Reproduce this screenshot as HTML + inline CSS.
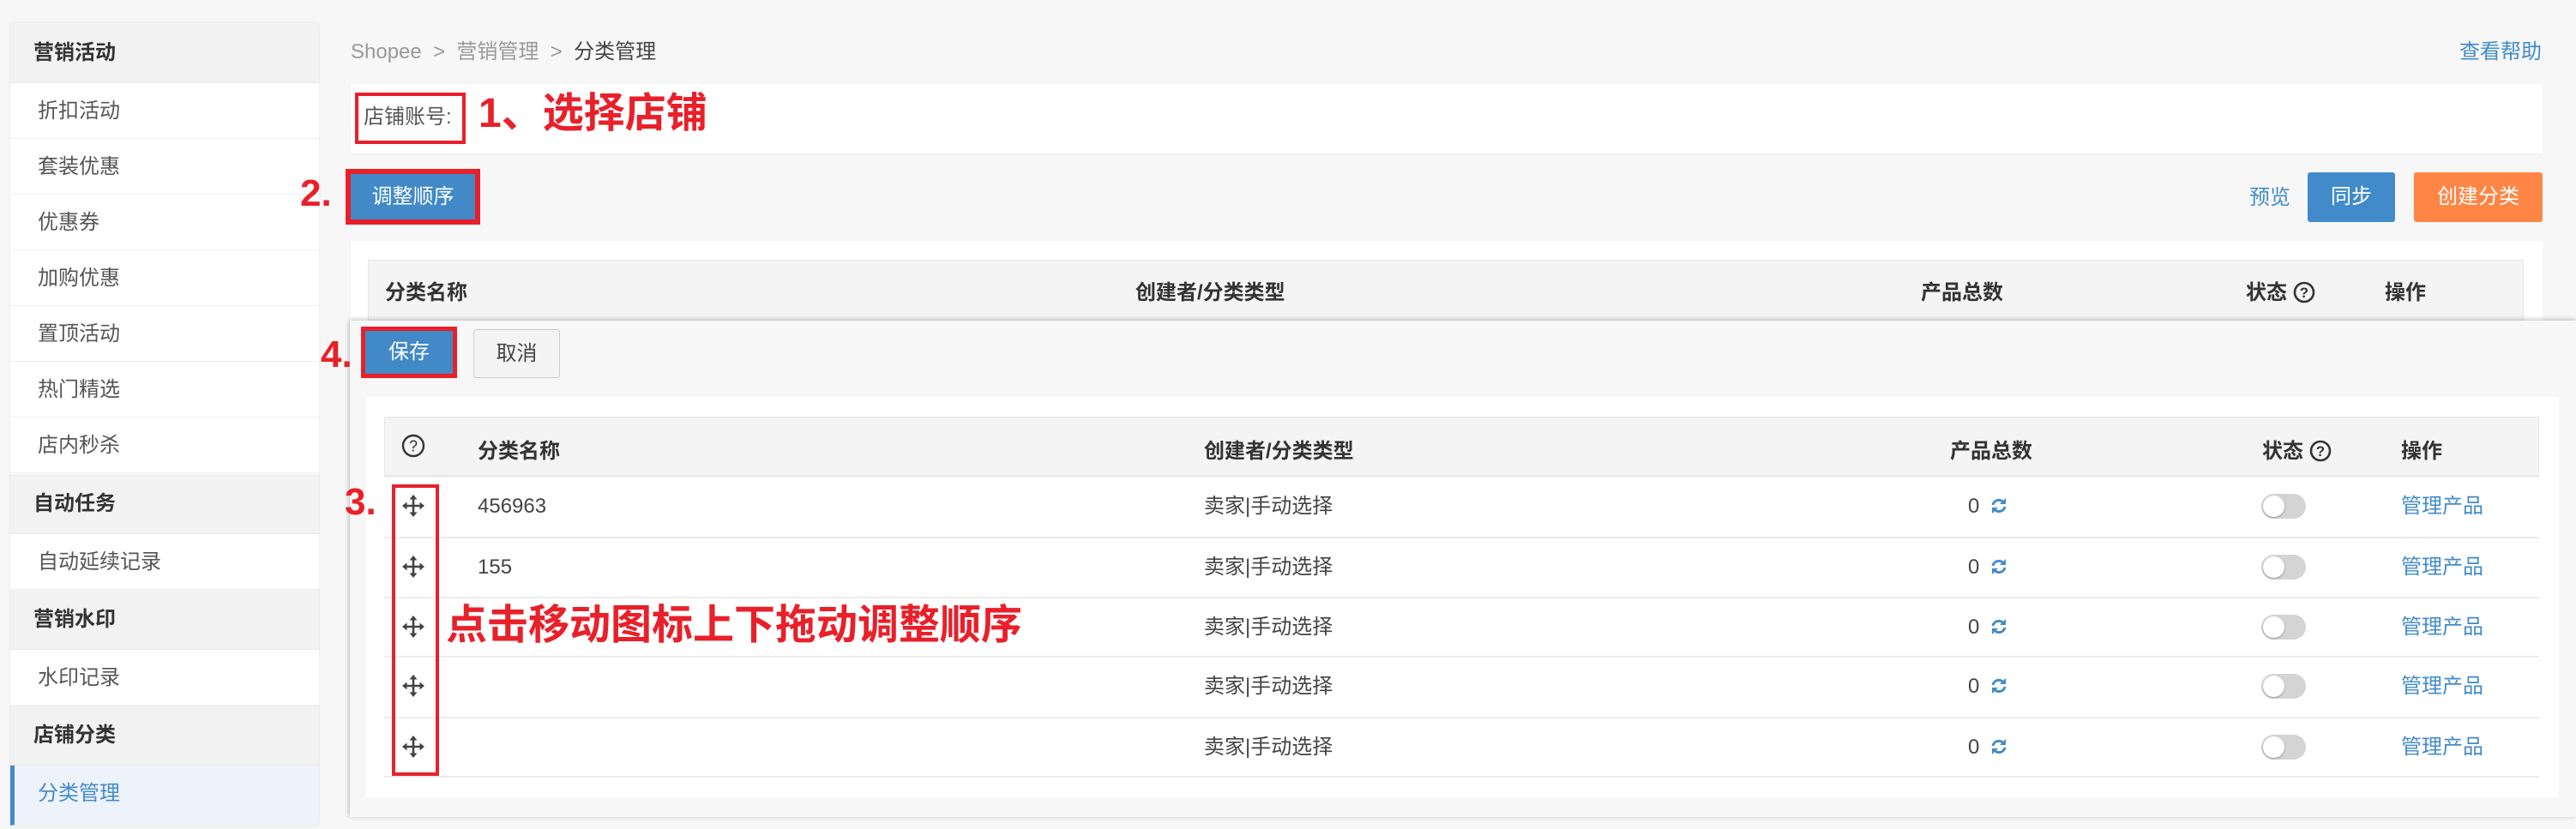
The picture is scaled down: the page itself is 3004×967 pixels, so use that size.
<!DOCTYPE html>
<html><head><meta charset="utf-8"><style>
*{margin:0;padding:0;box-sizing:border-box}
body{width:3004px;height:967px;background:#f7f7f7;font-family:"Liberation Sans","Noto Sans CJK SC",sans-serif;font-size:24px;color:#333;position:relative;overflow:hidden}
.a{position:absolute}
.side{left:12px;top:27px;width:360px;height:936px;background:#fff;box-shadow:0 0 4px rgba(0,0,0,.08)}
.sh{position:absolute;left:0;width:360px;height:70px;background:#f2f2f2;font-weight:bold;color:#333;line-height:70px;padding-left:27px;border-bottom:1px solid #e8e8e8}
.si{position:absolute;left:0;width:360px;height:65px;background:#fff;color:#555;line-height:65px;padding-left:32px;border-bottom:1px solid #eee}
.red{color:#e8202a;font-weight:bold}
.rbox{position:absolute;border:4px solid #e8202a}
.btn{position:absolute;color:#fff;text-align:center;border-radius:3px}
.th{position:absolute;font-weight:bold;color:#333}
.row{position:absolute;left:448px;width:2513px;height:70px;border-top:2px solid #ececec;background:#fff}
.row span{position:absolute;top:0;line-height:68px;color:#444}
.row span.link{color:#428bca}
.tog{position:absolute;width:52px;height:29px;border-radius:15px;background:#d4d4d4}
.tog:after{content:"";position:absolute;left:2px;top:2px;width:25px;height:25px;border-radius:50%;background:#fff;box-shadow:0 1px 2px rgba(0,0,0,.3)}
.link{color:#428bca}
</style></head><body>
<div class="a side">
<div class="sh" style="top:0">营销活动</div>
<div class="si" style="top:70px">折扣活动</div>
<div class="si" style="top:135px">套装优惠</div>
<div class="si" style="top:200px">优惠券</div>
<div class="si" style="top:265px">加购优惠</div>
<div class="si" style="top:330px">置顶活动</div>
<div class="si" style="top:395px">热门精选</div>
<div class="si" style="top:460px">店内秒杀</div>
<div class="sh" style="top:526px">自动任务</div>
<div class="si" style="top:596px">自动延续记录</div>
<div class="sh" style="top:661px">营销水印</div>
<div class="si" style="top:731px">水印记录</div>
<div class="sh" style="top:796px">店铺分类</div>
<div class="si" style="top:866px;background:#eef2fa;color:#428bca;border-left:5px solid #428bca;padding-left:27px;height:70px">分类管理</div>
</div>

<div class="a" style="left:409px;top:46px;line-height:30px;color:#999">Shopee &nbsp;&gt;&nbsp; 营销管理 &nbsp;&gt;&nbsp; <span style="color:#444">分类管理</span></div>
<div class="a link" style="right:40px;top:46px;line-height:30px">查看帮助</div>

<div class="a" style="left:409px;top:98px;width:2556px;height:81px;background:#fff;box-shadow:0 1px 2px rgba(0,0,0,.05)"></div>
<div class="rbox" style="left:414px;top:108px;width:129px;height:60px"></div>
<div class="a" style="left:424px;top:122px;color:#555;line-height:30px">店铺账号:</div>
<div class="a red" style="left:558px;top:104px;font-size:48px;line-height:58px">1、选择店铺</div>

<div class="a red" style="left:350px;top:198px;font-size:44px;line-height:56px">2.</div>
<div class="btn" style="left:403px;top:197px;width:157px;height:65px;background:#e8202a;border-radius:0"></div>
<div class="btn" style="left:409px;top:203px;width:145px;height:53px;background:#4189c7;border-radius:0;line-height:53px">调整顺序</div>

<div class="a link" style="left:2623px;top:216px;line-height:30px">预览</div>
<div class="btn" style="left:2691px;top:201px;width:102px;height:58px;background:#428bca;line-height:58px">同步</div>
<div class="btn" style="left:2815px;top:201px;width:150px;height:58px;background:#ff8545;line-height:58px">创建分类</div>

<div class="a" style="left:409px;top:281px;width:2556px;height:120px;background:#fff"></div>
<div class="a" style="left:429px;top:303px;width:2514px;height:80px;background:#f4f4f4;border:1px solid #e6e6e6"></div>
<div class="th" style="left:449px;top:321px">分类名称</div>
<div class="th" style="left:1324px;top:321px">创建者/分类类型</div>
<div class="th" style="left:2240px;top:321px">产品总数</div>
<div class="th" style="left:2619px;top:321px">状态 <svg width="26" height="26" viewBox="0 0 26 26" style="vertical-align:-5px"><circle cx="13" cy="13" r="11" fill="none" stroke="#333" stroke-width="2.6"/><text x="13" y="19" text-anchor="middle" font-size="17" font-weight="bold" font-family="Liberation Sans" fill="#333">?</text></svg></div>
<div class="th" style="left:2781px;top:321px">操作</div>

<!-- overlay -->
<div class="a" style="left:408px;top:374px;width:2596px;height:579px;background:#f7f7f7;box-shadow:0 -2px 5px rgba(0,0,0,.15),-2px 0 5px rgba(0,0,0,.12)"></div>
<div class="a red" style="left:374px;top:386px;font-size:44px;line-height:56px">4.</div>
<div class="btn" style="left:421px;top:381px;width:112px;height:60px;background:#e8202a;border-radius:0"></div>
<div class="btn" style="left:426px;top:386px;width:102px;height:50px;background:#4189c7;border-radius:0;line-height:50px">保存</div>
<div class="btn" style="left:552px;top:384px;width:101px;height:57px;background:#f4f4f4;border:1px solid #ccc;color:#444;line-height:55px">取消</div>

<div class="a" style="left:427px;top:463px;width:2557px;height:467px;background:#fff"></div>
<div class="a" style="left:448px;top:486px;width:2513px;height:69px;background:#f4f4f4;border:1px solid #e6e6e6"></div>
<svg class="a" style="left:467px;top:505px" width="30" height="30" viewBox="0 0 30 30"><circle cx="15" cy="15" r="12" fill="none" stroke="#333" stroke-width="2.4"/><text x="15" y="21.5" text-anchor="middle" font-size="18" font-family="Liberation Sans" fill="#333">?</text></svg>
<div class="th" style="left:557px;top:506px">分类名称</div>
<div class="th" style="left:1404px;top:506px">创建者/分类类型</div>
<div class="th" style="left:2274px;top:506px">产品总数</div>
<div class="th" style="left:2638px;top:506px">状态 <svg width="26" height="26" viewBox="0 0 26 26" style="vertical-align:-5px"><circle cx="13" cy="13" r="11" fill="none" stroke="#333" stroke-width="2.6"/><text x="13" y="19" text-anchor="middle" font-size="17" font-weight="bold" font-family="Liberation Sans" fill="#333">?</text></svg></div>
<div class="th" style="left:2800px;top:506px">操作</div>

<div class="row" style="top:555px"><span style="left:109px">456963</span><span style="left:956px">卖家|手动选择</span><span style="left:1847px">0</span><span style="left:2352px" class="link">管理产品</span></div>
<div class="row" style="top:626px"><span style="left:109px">155</span><span style="left:956px">卖家|手动选择</span><span style="left:1847px">0</span><span style="left:2352px" class="link">管理产品</span></div>
<div class="row" style="top:696px"><span style="left:956px">卖家|手动选择</span><span style="left:1847px">0</span><span style="left:2352px" class="link">管理产品</span></div>
<div class="row" style="top:765px"><span style="left:956px">卖家|手动选择</span><span style="left:1847px">0</span><span style="left:2352px" class="link">管理产品</span></div>
<div class="row" style="top:836px;height:71px;border-bottom:2px solid #ececec"><span style="left:956px">卖家|手动选择</span><span style="left:1847px">0</span><span style="left:2352px" class="link">管理产品</span></div>

<svg class="a" style="left:0;top:0" width="3004" height="967">
<defs>
<g id="mv" fill="#444" stroke="#444">
<path d="M-10 0H10M0 -10V10" stroke-width="2.6" fill="none"/>
<path d="M0 -13L-4.5 -7.5H4.5Z M0 13L-4.5 7.5H4.5Z M-13 0L-7.5 -4.5V4.5Z M13 0L7.5 -4.5V4.5Z" stroke="none"/>
</g>
<g id="rf" fill="none" stroke="#428bca" stroke-width="3">
<path d="M-7 -1A7 7 0 0 1 6 -3"/><path d="M7 1A7 7 0 0 1 -6 3"/>
<path d="M8 -9V-2H1Z M-8 9V2H-1Z" fill="#428bca" stroke="none"/>
</g>
</defs>
<use href="#mv" x="482" y="590"/><use href="#mv" x="482" y="661"/><use href="#mv" x="482" y="731"/><use href="#mv" x="482" y="800"/><use href="#mv" x="482" y="871"/>
<use href="#rf" x="2331" y="590"/><use href="#rf" x="2331" y="661"/><use href="#rf" x="2331" y="731"/><use href="#rf" x="2331" y="800"/><use href="#rf" x="2331" y="871"/>
</svg>
<div class="tog" style="left:2637px;top:576px"></div>
<div class="tog" style="left:2637px;top:647px"></div>
<div class="tog" style="left:2637px;top:717px"></div>
<div class="tog" style="left:2637px;top:786px"></div>
<div class="tog" style="left:2637px;top:857px"></div>

<div class="rbox" style="left:457px;top:565px;width:55px;height:340px"></div>
<div class="a red" style="left:402px;top:558px;font-size:44px;line-height:56px">3.</div>
<div class="a red" style="left:520px;top:701px;font-size:48px;line-height:58px">点击移动图标上下拖动调整顺序</div>
</body></html>
